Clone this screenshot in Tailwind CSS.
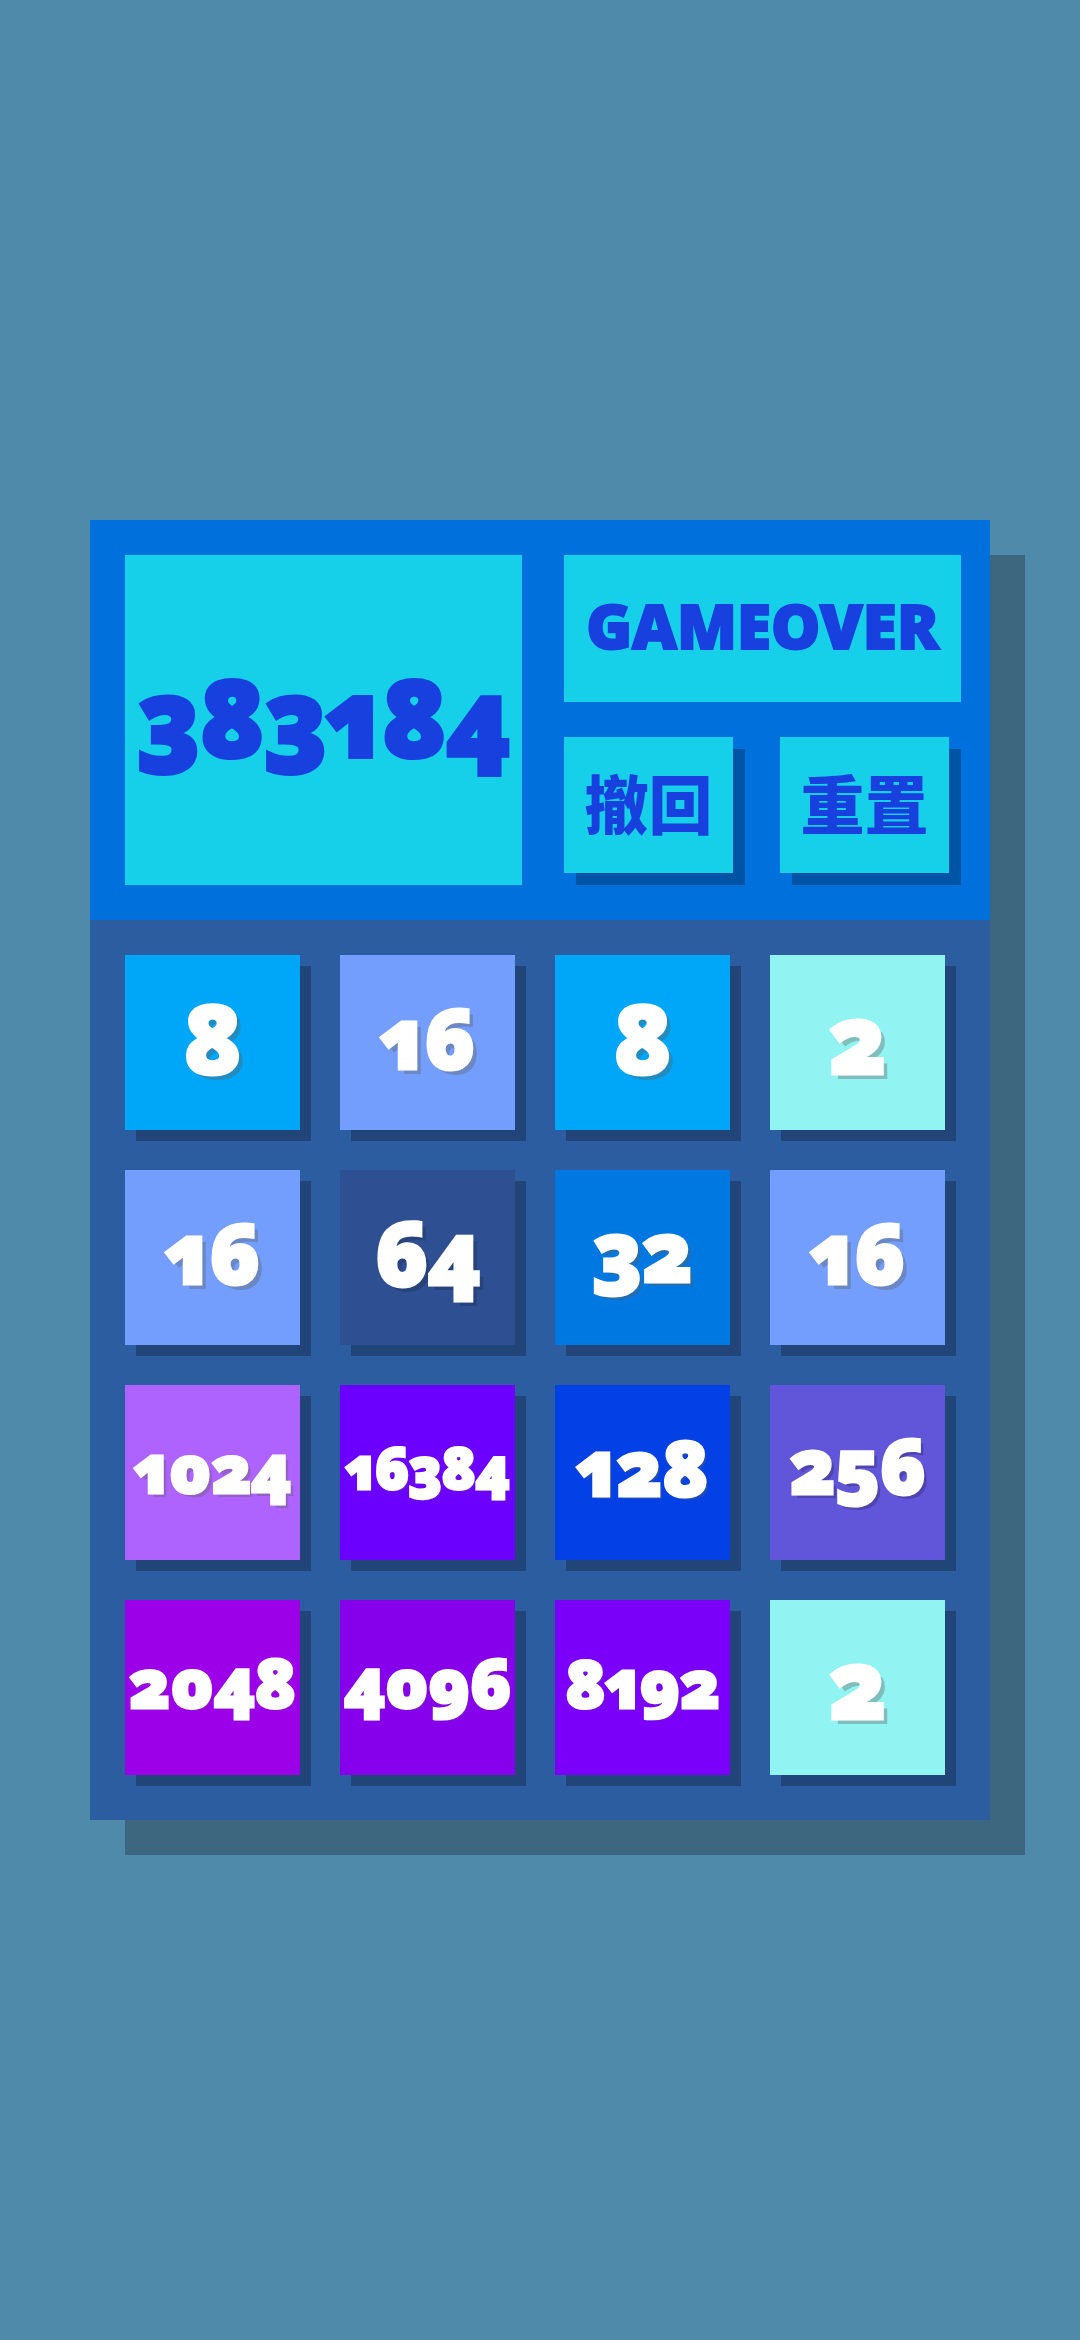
<!DOCTYPE html>
<html lang="zh-CN">
<head>
    <meta charset="UTF-8">
    <meta name="viewport" content="width=device-width, initial-scale=1.0">
    <title>2048</title>
    <script src="https://cdn.jsdelivr.net/npm/@tailwindcss/browser@4"></script>
</head>
<body class="bg-[#508aaa] min-h-screen flex items-center justify-center font-['Noto_Sans','Noto_Sans_CJK_SC',sans-serif] font-black oldstyle-nums proportional-nums">

    <main class="w-5/6 shadow-[35px_35px_0_rgba(0,0,0,0.25)]">

        <!-- Score, status and controls -->
        <header class="bg-[#0071dc] text-[#1740df] grid grid-cols-2 gap-[42px] py-[35px] pl-[35px] pr-[29px]">
            <div id="score" class="bg-[#16d0e9] pb-2 flex items-center justify-center text-[106px] leading-none [-webkit-text-stroke:4px_currentColor]">383184</div>
            <div class="flex flex-col gap-[35px]">
                <h1 id="status" class="bg-[#16d0e9] h-[147px] pb-2 flex items-center justify-center text-[62px] leading-none [-webkit-text-stroke:2px_currentColor]">GAMEOVER</h1>
                <div class="grid grid-cols-2 gap-[47px] pr-3 pb-3">
                    <button id="undoBtn" type="button" class="bg-[#16d0e9] h-[136px] text-[64px] leading-none whitespace-nowrap shadow-[12px_12px_0_rgba(0,0,0,0.25)]">撤回</button>
                    <button id="resetBtn" type="button" class="bg-[#16d0e9] h-[136px] text-[64px] leading-none whitespace-nowrap shadow-[12px_12px_0_rgba(0,0,0,0.25)]">重置</button>
                </div>
            </div>
        </header>

        <!-- Board -->
        <section id="board" class="bg-[#2c5da0] text-white leading-none [-webkit-text-stroke:3px_currentColor] grid grid-cols-4 gap-10 pt-[35px] pl-[35px] pr-[45px] pb-[45px]">
            <div class="aspect-square pb-3 flex items-center justify-center bg-[#00a6f7] text-[96px] text-shadow-[5px_5px_0_rgba(94,94,94,0.36)] shadow-[11px_11px_0_rgba(0,0,0,0.25)]">8</div>
            <div class="aspect-square pb-3 flex items-center justify-center bg-[#739efd] text-[84px] text-shadow-[5px_5px_0_rgba(94,94,94,0.36)] shadow-[11px_11px_0_rgba(0,0,0,0.25)]">16</div>
            <div class="aspect-square pb-3 flex items-center justify-center bg-[#00a6f7] text-[96px] text-shadow-[5px_5px_0_rgba(94,94,94,0.36)] shadow-[11px_11px_0_rgba(0,0,0,0.25)]">8</div>
            <div class="aspect-square pb-3 flex items-center justify-center bg-[#92f4f2] text-[96px] text-shadow-[5px_5px_0_rgba(94,94,94,0.36)] shadow-[11px_11px_0_rgba(0,0,0,0.25)]">2</div>

            <div class="aspect-square pb-3 flex items-center justify-center bg-[#739efd] text-[84px] text-shadow-[5px_5px_0_rgba(94,94,94,0.36)] shadow-[11px_11px_0_rgba(0,0,0,0.25)]">16</div>
            <div class="aspect-square pb-3 flex items-center justify-center bg-[#2e4f91] text-[88px] text-shadow-[5px_5px_0_rgba(0,0,0,0.15)] shadow-[11px_11px_0_rgba(0,0,0,0.25)]">64</div>
            <div class="aspect-square pb-4 flex items-center justify-center bg-[#0078e2] text-[84px] text-shadow-[4px_4px_0_rgba(94,94,94,0.36)] shadow-[11px_11px_0_rgba(0,0,0,0.25)]">32</div>
            <div class="aspect-square pb-3 flex items-center justify-center bg-[#739efd] text-[84px] text-shadow-[5px_5px_0_rgba(94,94,94,0.36)] shadow-[11px_11px_0_rgba(0,0,0,0.25)]">16</div>

            <div class="aspect-square pb-3 flex items-center justify-center bg-[#ae63ff] text-[66px] text-shadow-[4px_4px_0_rgba(94,94,94,0.36)] shadow-[11px_11px_0_rgba(0,0,0,0.25)]">1024</div>
            <div class="aspect-square pb-3 flex items-center justify-center bg-[#6c00ff] text-[56px] text-shadow-[2px_2px_0_rgba(94,94,94,0.36)] shadow-[11px_11px_0_rgba(0,0,0,0.25)]">16384</div>
            <div class="aspect-square pb-3 flex items-center justify-center bg-[#0341e6] text-[76px] text-shadow-[3px_3px_0_rgba(94,94,94,0.36)] shadow-[11px_11px_0_rgba(0,0,0,0.25)]">128</div>
            <div class="aspect-square pb-4 flex items-center justify-center bg-[#6155d9] text-[76px] text-shadow-[4px_4px_0_rgba(0,0,0,0.2)] shadow-[11px_11px_0_rgba(0,0,0,0.25)]">256</div>

            <div class="aspect-square pb-3 flex items-center justify-center bg-[#9c00e8] text-[68px] text-shadow-[2px_2px_0_rgba(94,94,94,0.36)] shadow-[11px_11px_0_rgba(0,0,0,0.25)]">2048</div>
            <div class="aspect-square pb-3 flex items-center justify-center bg-[#8700ec] text-[68px] text-shadow-[2px_2px_0_rgba(94,94,94,0.36)] shadow-[11px_11px_0_rgba(0,0,0,0.25)]">4096</div>
            <div class="aspect-square pb-3 flex items-center justify-center bg-[#7a00fa] text-[66px] text-shadow-[2px_2px_0_rgba(94,94,94,0.36)] shadow-[11px_11px_0_rgba(0,0,0,0.25)]">8192</div>
            <div class="aspect-square pb-3 flex items-center justify-center bg-[#92f4f2] text-[96px] text-shadow-[5px_5px_0_rgba(94,94,94,0.36)] shadow-[11px_11px_0_rgba(0,0,0,0.25)]">2</div>
        </section>

    </main>

</body>
</html>
